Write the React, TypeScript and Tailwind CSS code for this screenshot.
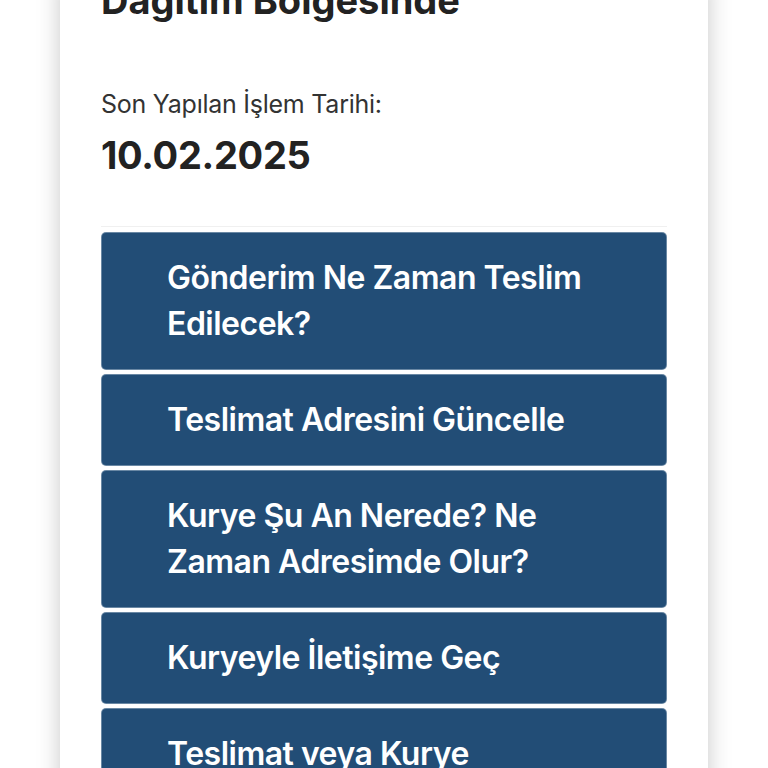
import React from "react";

const items = [
  "Gönderim Ne Zaman Teslim Edilecek?",
  "Teslimat Adresini Güncelle",
  "Kurye Şu An Nerede? Ne Zaman Adresimde Olur?",
  "Kuryeyle İletişime Geç",
  "Teslimat veya Kurye Hakkında Şikayet",
];

export default function App() {
  return (
    <div className="w-[768px] h-[768px] overflow-hidden bg-white" style={{ fontFamily: "Inter, 'Noto Sans', sans-serif" }}>
      <div className="ml-[60px] w-[648px] h-[900px] bg-white shadow-[0_0_22px_rgba(0,0,0,0.22)] px-[41px] pt-0">
        <div className="-mt-[22px] text-[38px] leading-[44px] font-bold text-[#222]">
          Dağıtım Bölgesinde
        </div>
        <div className="mt-[67px] text-[25px] leading-[30px] text-[#333] tracking-[-0.25px]">Son Yapılan İşlem Tarihi:</div>
        <div className="mt-[14px] text-[38px] leading-[44px] font-bold text-[#222] tracking-[-0.3px]">10.02.2025</div>
        <div className="mt-[49px] border-t border-[#f0f0f0] pt-[5px] flex flex-col gap-[4px]">
          {items.map((t) => (
            <div
              key={t}
              className="bg-[#224d76] rounded-[5px] border border-[#d7e0ea]/40 pl-[65px] pr-[66px] py-[22px] text-white text-[32px] leading-[46px] font-semibold tracking-[-0.5px]"
            >
              {t}
            </div>
          ))}
        </div>
      </div>
    </div>
  );
}
